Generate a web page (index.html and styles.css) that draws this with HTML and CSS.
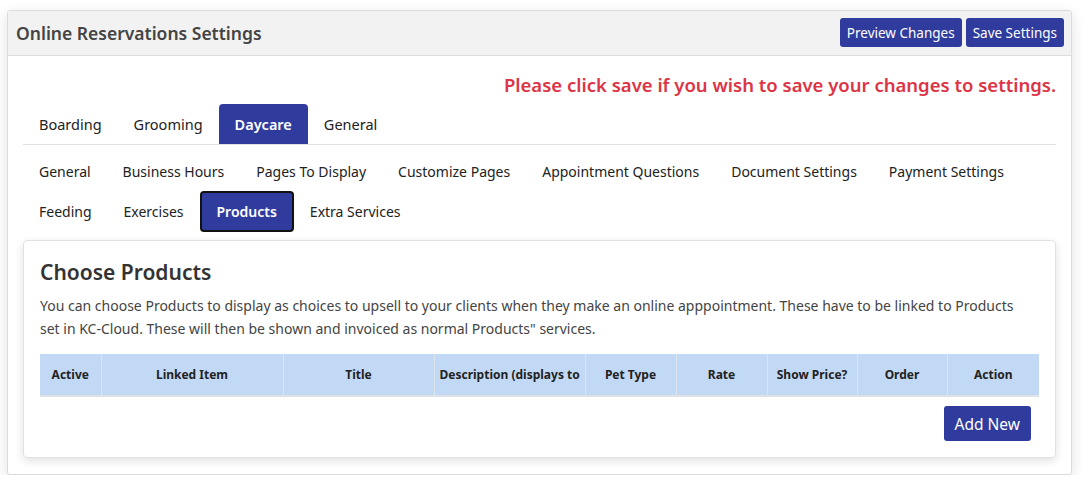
FILE: index.html
```html
<!DOCTYPE html>
<html lang="en">
<head>
  <meta charset="UTF-8">
  <title>Online Reservations Settings</title>
  <link rel="stylesheet" href="styles.css">
</head>
<body>

  <div class="panel">
    <div class="panel-head">
      <h2>Online Reservations Settings</h2>
      <div class="head-actions">
        <button class="btn">Preview Changes</button>
        <button class="btn">Save Settings</button>
      </div>
    </div>

    <div class="panel-body">
      <p class="save-note">Please click save if you wish to save your changes to settings.</p>

      <ul class="main-tabs">
        <li>Boarding</li>
        <li>Grooming</li>
        <li class="active">Daycare</li>
        <li>General</li>
      </ul>

      <ul class="sub-tabs">
        <li>General</li>
        <li>Business Hours</li>
        <li>Pages To Display</li>
        <li>Customize Pages</li>
        <li>Appointment Questions</li>
        <li>Document Settings</li>
        <li>Payment Settings</li>
        <li>Feeding</li>
        <li>Exercises</li>
        <li class="active">Products</li>
        <li>Extra Services</li>
      </ul>

      <div class="card">
        <h3>Choose Products</h3>
        <p>You can choose Products to display as choices to upsell to your clients when they make an online apppointment. These have to be linked to Products set in KC-Cloud. These will then be shown and invoiced as normal Products" services.</p>

        <table class="products">
          <thead>
            <tr>
              <th class="c-active">Active</th>
              <th class="c-linked">Linked Item</th>
              <th class="c-title">Title</th>
              <th class="c-desc"><span class="clip">Description (displays to client)</span></th>
              <th class="c-pet">Pet Type</th>
              <th class="c-rate">Rate</th>
              <th class="c-show">Show Price?</th>
              <th class="c-order">Order</th>
              <th class="c-action">Action</th>
            </tr>
          </thead>
          <tbody></tbody>
        </table>

        <div class="card-foot">
          <button class="btn btn-lg">Add New</button>
        </div>
      </div>
    </div>
  </div>

</body>
</html>
```

FILE: styles.css
```css
* {
  box-sizing: border-box;
}

body {
  margin: 0;
  padding: 10px 19px 0 7px;
  font-family: "Noto Sans", "Open Sans", sans-serif;
  background: #fff;
  color: #212529;
}

.panel {
  border: 1px solid #dcdcdc;
  border-radius: 3px;
  background: #fff;
  box-shadow: 0 4px 14px rgba(0,0,0,0.12);
}

.panel-head {
  display: flex;
  align-items: center;
  justify-content: space-between;
  background: #f2f2f2;
  border-bottom: 1px solid #dcdcdc;
  padding: 7px 7px 8px 8px;
  height: 45px;
}

.panel-head h2 {
  margin: 0;
  font-size: 17.5px;
  font-weight: 600;
  color: #444;
}

.head-actions {
  display: flex;
  gap: 4px;
}

.btn {
  background: #2f3c9e;
  color: #fff;
  border: none;
  border-radius: 3px;
  font-family: inherit;
  font-size: 13.5px;
  padding: 0 7px;
  height: 29px;
  cursor: pointer;
}

.btn-lg {
  font-size: 15.5px;
  height: 35px;
  padding: 0 11px;
}

.panel-body {
  padding: 14px 15px 16px 15px;
}

.save-note {
  margin: 0;
  text-align: right;
  font-size: 18.5px;
  font-weight: 600;
  color: #dc3545;
  line-height: 30px;
}

.main-tabs {
  list-style: none;
  margin: 4px 0 0;
  padding: 0;
  display: flex;
  border-bottom: 1px solid #dee2e6;
}

.main-tabs li {
  padding: 0 16px;
  height: 40px;
  line-height: 40px;
  font-size: 14.5px;
  color: #222;
  border-radius: 4px 4px 0 0;
}

.main-tabs li.active {
  background: #2f3c9e;
  color: #fff;
  font-weight: 600;
}

.sub-tabs {
  list-style: none;
  margin: 8px 0 0;
  padding: 0;
  display: flex;
  flex-wrap: wrap;
  align-items: center;
}

.sub-tabs li {
  padding: 0 16px;
  height: 38px;
  line-height: 38px;
  font-size: 14px;
  color: #222;
}

.sub-tabs li.active {
  background: #2f3c9e;
  color: #fff;
  font-weight: 600;
  border: 2px solid #111;
  border-radius: 4px;
  line-height: 37px;
  height: 41px;
  padding: 0 15px;
}

.card {
  margin-top: 8px;
  border: 1px solid #dee2e6;
  border-radius: 4px;
  padding: 17px 16px 16px 16px;
  box-shadow: 0 3px 10px rgba(0,0,0,0.12);
}

.card h3 {
  margin: 0 0 8px;
  font-size: 21px;
  font-weight: 600;
  color: #333;
}

.card p {
  margin: 0 0 14px;
  padding-right: 14px;
  font-size: 14px;
  line-height: 23px;
  color: #444;
}

.products {
  width: 100%;
  border-collapse: collapse;
  table-layout: fixed;
}

.products th {
  background: #c2d9f6;
  border-left: 1px solid #dde5ef;
  border-bottom: 2px solid #dee2e6;
  height: 42px;
  font-size: 12px;
  font-weight: 700;
  color: #222;
  text-align: center;
  white-space: nowrap;
  padding: 0 4px;
}

.products th:first-child {
  border-left: none;
}

.products th.c-desc {
  text-align: left;
  padding-left: 5px;
}

.clip {
  display: block;
  overflow: hidden;
}

.c-active { width: 61px; }
.c-linked { width: 182px; }
.c-title { width: 151px; }
.c-desc { width: 151px; }
.c-pet { width: 91px; }
.c-rate { width: 91px; }
.c-show { width: 90px; }
.c-order { width: 90px; }

.card-foot {
  display: flex;
  justify-content: flex-end;
  padding: 9px 8px 0 0;
}
```
